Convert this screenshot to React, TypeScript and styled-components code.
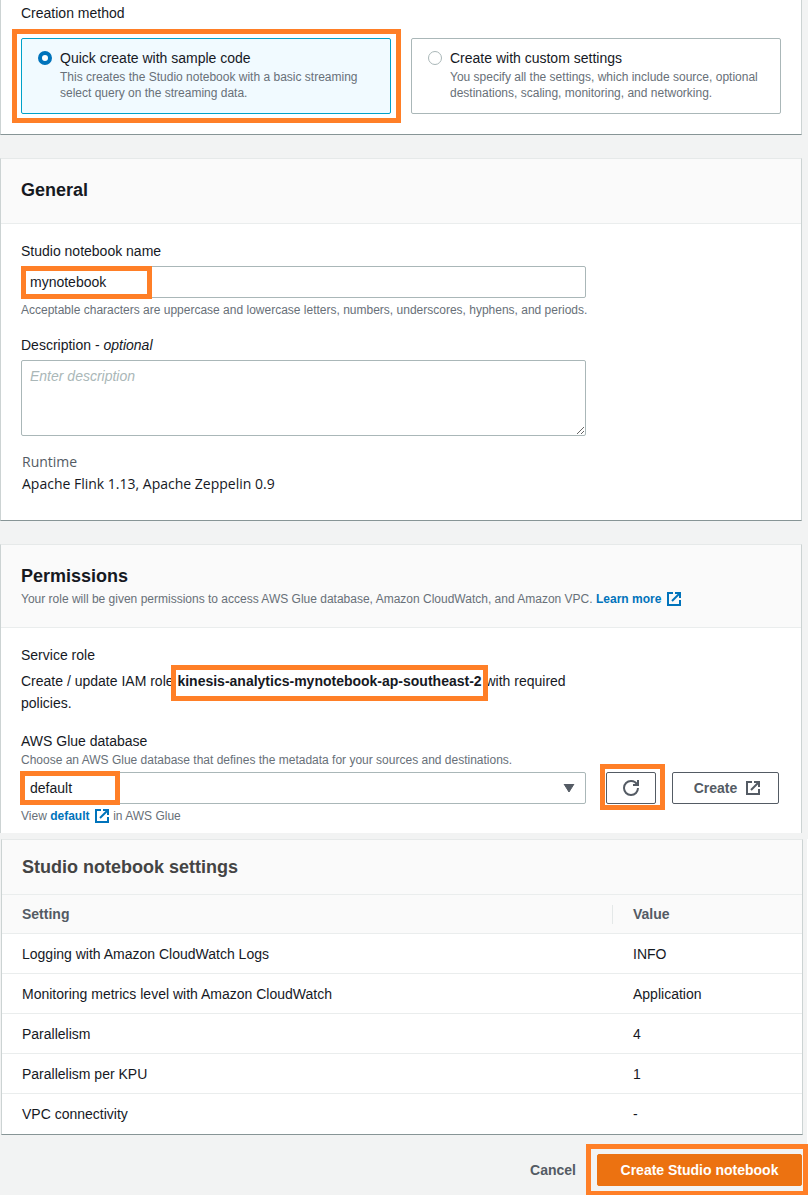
import React, { useState } from "react";
import styled, { createGlobalStyle, css } from "styled-components";

const GlobalStyle = createGlobalStyle`
  *, *::before, *::after { box-sizing: border-box; }
  body {
    margin: 0;
    background: #fff;
    color: #16191f;
    font: 14px/22px "Liberation Sans", Arial, sans-serif;
  }
  h2, p { margin: 0; }
  input, select, textarea, button { font: inherit; color: inherit; margin: 0; }
`;

const Page = styled.main`
  background: #f2f3f3;
  min-width: 640px;
`;

const Upper = styled.div`
  display: flex;
  flex-direction: column;
  gap: 23px;
  padding-right: 6px;
`;

const Lower = styled.div`
  margin-top: 6px;
  padding: 0 4px 9px 1px;
  border-right: 1px solid #fff;
`;

const Panel = styled.section<{ $openTop?: boolean; $openBottom?: boolean }>`
  background: #fff;
  border: 1px solid #ccd3d3;
  border-top-color: #e6e9e9;
  border-bottom-color: #879596;
  ${(p) => p.$openTop && css`border-top: 0;`}
  ${(p) => p.$openBottom && css`border-bottom: 0;`}
`;

const PanelHeader = styled.header<{ $compact?: boolean }>`
  display: flex;
  flex-direction: column;
  gap: 4px;
  min-height: ${(p) => (p.$compact ? 55 : 65)}px;
  padding: ${(p) => (p.$compact ? 16 : 20)}px 20px;
  background: #fafafa;
  border-bottom: 1px solid #eaeded;
`;

const Title = styled.h2<{ $muted?: boolean }>`
  font-size: 18px;
  line-height: 22px;
  font-weight: 700;
  color: ${(p) => (p.$muted ? "#444444" : "#16191f")};
`;

const PanelBody = styled.div<{ $bottom: number }>`
  display: flex;
  flex-direction: column;
  gap: 16px;
  padding: 16px 20px ${(p) => p.$bottom}px;
`;

const MethodGroup = styled.fieldset`
  margin: 0;
  border: 0;
  padding: 0 20px 20px;
`;

const Legend = styled.legend`
  padding: 2px 0 0;
  margin-bottom: 14px;
`;

const Tiles = styled.div`
  display: grid;
  grid-template-columns: 1fr 1fr;
  gap: 20px;
`;

const Tile = styled.label<{ $selected: boolean }>`
  display: flex;
  gap: 8px;
  padding: 8px 16px 12px;
  border: 1px solid ${(p) => (p.$selected ? "#00a1c9" : "#aab7b8")};
  border-radius: 2px;
  background: ${(p) => (p.$selected ? "#f1faff" : "#fff")};
`;

const Radio = styled.input`
  appearance: none;
  flex: none;
  width: 14px;
  height: 14px;
  margin-top: 4px;
  border: 1px solid #aab7b8;
  border-radius: 50%;
  background: #fff;
  &:checked { border: 4px solid #0073bb; }
`;

const Hint = styled.span`
  display: block;
  font-size: 12px;
  line-height: 16px;
  color: #687078;
`;

/* Orange marker frame drawn over the part that it wraps. */
const Marked = styled.span<{ $inset: string; $inline?: boolean; $width?: number }>`
  position: relative;
  display: ${(p) => (p.$inline ? "inline-block" : "grid")};
  &::after {
    content: "";
    position: absolute;
    inset: ${(p) => p.$inset};
    ${(p) => p.$width && css`width: ${p.$width}px;`}
    border: 5px solid #ff7f27;
    pointer-events: none;
  }
`;

const FieldRow = styled.div`
  display: grid;
  grid-template-columns: minmax(0, 1fr) 175px;
  column-gap: 20px;
  align-items: end;
`;

const Field = styled.div`
  display: flex;
  flex-direction: column;
  gap: 4px;
`;

const Label = styled.label`
  display: block;
`;

const control = css`
  display: block;
  width: 100%;
  border: 1px solid #aab7b8;
  border-radius: 2px;
  background: #fff;
  padding: 4px 8px;
`;

const TextInput = styled.input`
  ${control}
  height: 32px;
`;

const TextArea = styled.textarea`
  ${control}
  height: 76px;
  resize: vertical;
  &::placeholder { color: #aab7b8; font-style: italic; opacity: 1; }
`;

const Select = styled.select`
  ${control}
  height: 32px;
  appearance: none;
`;

const Caret = styled.svg`
  position: absolute;
  right: 11px;
  top: 12px;
  pointer-events: none;
`;

const Wide = styled(Hint)`
  white-space: nowrap;
`;

const Runtime = styled.div`
  display: grid;
  gap: 2px;
  padding-left: 1px;
  font-family: "Open Sans", "Noto Sans", sans-serif;
  font-size: 14px;
  line-height: 20px;
`;

const RuntimeKey = styled.div`
  color: #545b64;
`;

const RuntimeValue = styled.div`
  font-weight: 500;
`;

const Link = styled.a`
  color: #0073bb;
  font-weight: 700;
  text-decoration: none;
  svg { vertical-align: -4px; margin-left: 1px; }
`;

const Buttons = styled.div`
  display: flex;
  gap: 16px;
`;

const buttonKinds = {
  normal: css`
    min-width: 107px;
    padding: 0 16px 0 20px;
  `,
  icon: css`
    padding: 0 16px;
  `,
  link: css`
    border-color: transparent;
    background: transparent;
  `,
  primary: css`
    min-width: 205px;
    border-color: #ec7211;
    background: #ec7211;
    color: #fff;
  `,
};

const Button = styled.button<{ $kind?: keyof typeof buttonKinds }>`
  display: inline-flex;
  align-items: center;
  justify-content: center;
  gap: 8px;
  height: 32px;
  padding: 0 20px;
  border: 1px solid #545b64;
  border-radius: 2px;
  background: #fff;
  color: #545b64;
  font-weight: 700;
  white-space: nowrap;
  ${(p) => buttonKinds[p.$kind ?? "normal"]}
`;

const Table = styled.table`
  width: 100%;
  border-collapse: separate;
  border-spacing: 0;
  text-align: left;
  th, td { height: 40px; padding: 0 20px; border-bottom: 1px solid #eaeded; }
  tbody tr:last-child td { border-bottom: 0; }
  th { height: 39px; background: #fafafa; color: #545b64; }
  th:last-child { width: 189px; }
  th:first-child {
    background: linear-gradient(#e4e8e8, #e4e8e8) right center / 1px 19px no-repeat #fafafa;
  }
`;

const Footer = styled.footer`
  display: flex;
  justify-content: flex-end;
  padding: 19px 1px 0 0;
`;

const External = () => (
  <svg width="16" height="16" viewBox="0 0 16 16" fill="none" stroke="currentColor" strokeWidth="2" aria-hidden="true">
    <path d="M10 2h4v4" strokeLinecap="square" />
    <path d="M6 10l8-8" />
    <path d="M14 9v5H2V2h5" />
  </svg>
);

const Refresh = () => (
  <svg width="16" height="16" viewBox="0 0 16 16" fill="none" stroke="currentColor" strokeWidth="2" aria-hidden="true">
    <path d="M10 5h5V0" />
    <path d="M15 8a6.957 6.957 0 0 1-7 7 6.957 6.957 0 0 1-7-7 6.957 6.957 0 0 1 7-7 6.870 6.870 0 0 1 6.300 4" />
  </svg>
);

const methods = [
  {
    id: "quick",
    title: "Quick create with sample code",
    text: "This creates the Studio notebook with a basic streaming select query on the streaming data.",
  },
  {
    id: "custom",
    title: "Create with custom settings",
    text: "You specify all the settings, which include source, optional destinations, scaling, monitoring, and networking.",
  },
];

const settings = [
  ["Logging with Amazon CloudWatch Logs", "INFO"],
  ["Monitoring metrics level with Amazon CloudWatch", "Application"],
  ["Parallelism", "4"],
  ["Parallelism per KPU", "1"],
  ["VPC connectivity", "-"],
];

export default function App() {
  const [method, setMethod] = useState("quick");

  const tile = (m: (typeof methods)[number]) => (
    <Tile key={m.id} $selected={method === m.id}>
      <Radio type="radio" name="method" checked={method === m.id} onChange={() => setMethod(m.id)} />
      <span>
        {m.title}
        <Hint>{m.text}</Hint>
      </span>
    </Tile>
  );

  return (
    <Page>
      <GlobalStyle />
      <Upper>
        <Panel $openTop>
          <MethodGroup>
            <Legend>Creation method</Legend>
            <Tiles>
              <Marked $inset="-9px -10px -9px -9px">{tile(methods[0])}</Marked>
              {tile(methods[1])}
            </Tiles>
          </MethodGroup>
        </Panel>

        <Panel>
          <PanelHeader>
            <Title>General</Title>
          </PanelHeader>
          <PanelBody $bottom={26}>
            <FieldRow>
              <Field>
                <Label htmlFor="name">Studio notebook name</Label>
                <Marked $inset="0 auto -1px 0" $width={131}>
                  <TextInput id="name" defaultValue="mynotebook" />
                </Marked>
                <Wide>
                  Acceptable characters are uppercase and lowercase letters, numbers, underscores, hyphens, and periods.
                </Wide>
              </Field>
            </FieldRow>
            <FieldRow>
              <Field>
                <Label htmlFor="description">
                  Description - <i>optional</i>
                </Label>
                <TextArea id="description" placeholder="Enter description" />
              </Field>
            </FieldRow>
            <Runtime>
              <RuntimeKey>Runtime</RuntimeKey>
              <RuntimeValue>Apache Flink 1.13, Apache Zeppelin 0.9</RuntimeValue>
            </Runtime>
          </PanelBody>
        </Panel>

        <Panel $openBottom>
          <PanelHeader>
            <Title>Permissions</Title>
            <Hint>
              Your role will be given permissions to access AWS Glue database, Amazon CloudWatch, and Amazon VPC.{" "}
              <Link href="#learn">
                Learn more <External />
              </Link>
            </Hint>
          </PanelHeader>
          <PanelBody $bottom={9}>
            <FieldRow>
              <Field>
                <div>Service role</div>
                <p>
                  Create / update IAM role{" "}
                  <Marked as="strong" $inline $inset="-5px -6px -9px -6px">
                    kinesis-analytics-mynotebook-ap-southeast-2
                  </Marked>{" "}
                  with required policies.
                </p>
              </Field>
            </FieldRow>
            <div>
              <Label htmlFor="database">AWS Glue database</Label>
              <Field>
                <Hint>Choose an AWS Glue database that defines the metadata for your sources and destinations.</Hint>
                <FieldRow>
                  <Marked $inset="-1px auto -1px -1px" $width={100}>
                    <Select id="database" defaultValue="default">
                      <option>default</option>
                    </Select>
                    <Caret width="12" height="8" viewBox="0 0 12 8" aria-hidden="true">
                      <path d="M1 0h10L6 8z" fill="#545b64" stroke="#545b64" />
                    </Caret>
                  </Marked>
                  <Buttons>
                    <Marked $inset="-8px -9px -6px -6px">
                      <Button type="button" $kind="icon" aria-label="Refresh databases">
                        <Refresh />
                      </Button>
                    </Marked>
                    <Button type="button">
                      Create <External />
                    </Button>
                  </Buttons>
                </FieldRow>
                <Hint>
                  View{" "}
                  <Link href="#default">
                    default <External />
                  </Link>{" "}
                  in AWS Glue
                </Hint>
              </Field>
            </div>
          </PanelBody>
        </Panel>
      </Upper>

      <Lower>
        <Panel>
          <PanelHeader $compact>
            <Title $muted>Studio notebook settings</Title>
          </PanelHeader>
          <Table>
            <thead>
              <tr>
                <th scope="col">Setting</th>
                <th scope="col">Value</th>
              </tr>
            </thead>
            <tbody>
              {settings.map(([name, value]) => (
                <tr key={name}>
                  <td>{name}</td>
                  <td>{value}</td>
                </tr>
              ))}
            </tbody>
          </Table>
        </Panel>
        <Footer>
          <Button type="button" $kind="link">
            Cancel
          </Button>
          <Marked $inset="-10px -6px -10px -11px">
            <Button type="submit" $kind="primary">
              Create Studio notebook
            </Button>
          </Marked>
        </Footer>
      </Lower>
    </Page>
  );
}
